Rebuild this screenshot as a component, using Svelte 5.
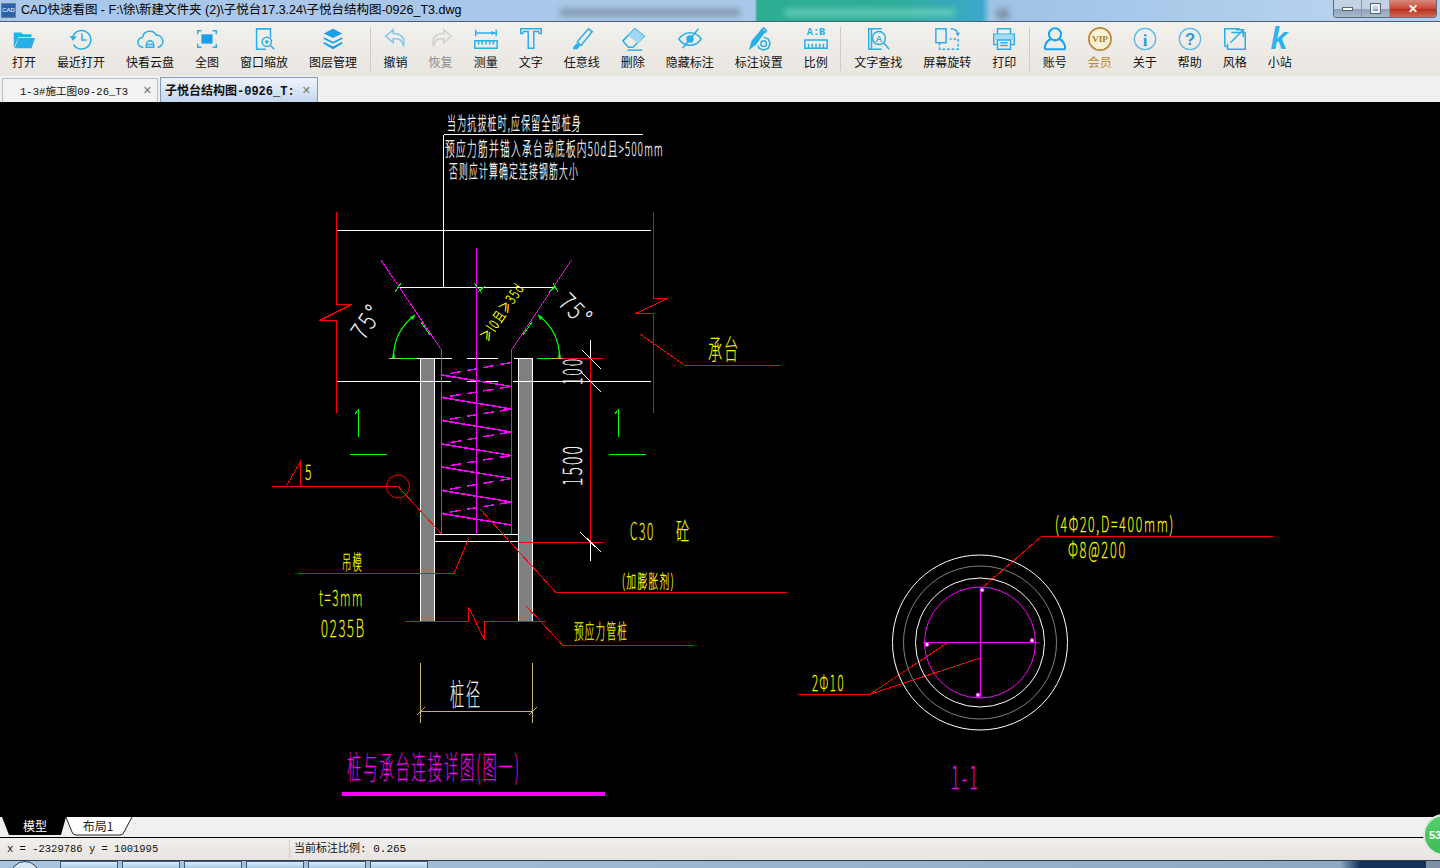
<script>
  // toolbar icon bodies, drawn on a 28x28 box
  const blue = '#29aee8';
  const line = `fill="none" stroke="${blue}" stroke-width="1.6"`;
  const icons = {
    open: `<path d="M3 7h8l2 2h9v3H8l-5 12z" fill="${blue}"/><path d="M8 13h18l-4 11H4z" fill="${blue}"/>`,
    recent: `<path d="M5 12a10 10 0 1 1 1 8" ${line}/><path d="M1.5 11l4 5 4-5z" fill="${blue}"/><path d="M15 8v7h5" ${line} stroke-width="2"/>`,
    cloud: `<path d="M7 23a5.500 5.500 0 0 1-1-11 8 8 0 0 1 15-2 6.500 6.500 0 0 1 1 13" ${line} stroke-width="1.800"/><path d="M10 23v-3a4 4 0 0 1 8 0v3zM10 20h8" ${line}/>`,
    full: `<path d="M4 9V5h4M20 5h4v4M24 19v4h-4M8 23H4v-4" ${line} stroke-width="2"/><rect x="8" y="9" width="12" height="10" fill="#1b9fe6"/>`,
    zoomwin: `<path d="M21 12V3H6v22h10" ${line}/><path d="M6 3h15" ${line} stroke-width="2.400"/><circle cx="17" cy="17" r="5" ${line}/><path d="M15 17h4M17 15v4" ${line}/><path d="M21 21l4 4" ${line} stroke-width="2.200"/>`,
    layers: `<path d="M14 3l10 5-10 5-10-5z" fill="#1b9fe6"/><path d="M4 12l10 5 10-5v2l-10 5-10-5z" fill="#1b9fe6"/><path d="M4 17l10 5 10-5v2l-10 6-10-6z" fill="#1b9fe6"/>`,
    undo: `<path d="M11 4L3 11l8 7v-4c6-1 10 1 11 8 2-8-1-14-11-14z" fill="none" stroke="#7cc7ef" stroke-width="1.600"/>`,
    redo: `<path d="M17 4l8 7-8 7v-4c-6-1-10 1-11 8-2-8 1-14 11-14z" fill="none" stroke="#cfcfcf" stroke-width="1.600"/>`,
    measure: `<path d="M3 4v7M25 4v7M4 7.500h20" ${line}/><path d="M20 5l4 2.500-4 2.500z" fill="${blue}"/><path d="M2 16h24v8H2zM6 16v4M10 16v4M14 16v4M18 16v4M22 16v4" ${line}/>`,
    text: `<path d="M3 3h22v5h-2l-1-2h-5v18h-6V6H6L5 8H3z" ${line} stroke-width="1.800"/>`,
    pen: `<path d="M9 17L21 3l4 3-12 15z" ${line}/><path d="M9 18l3 3-3 4H4l1-3z" fill="${blue}"/>`,
    eraser: `<path d="M3 16L16 3l10 8-12 12H9z" ${line}/><path d="M9 10l10 9 7-8-10-8z" fill="#9fd8f4"/><path d="M8 26h16" ${line}/>`,
    eye: `<path d="M2 14c6-9 18-9 24 0-6 9-18 9-24 0z" ${line} stroke-width="1.800"/><circle cx="14" cy="14" r="4" fill="${blue}"/><path d="M23 3L6 24" ${line}/>`,
    setting: `<path d="M3 26l3-10L17 3l4 3-10 14z" fill="${blue}"/><path d="M16 5l3-3 3 3-2 3" ${line}/><circle cx="19" cy="19" r="3" ${line}/><path d="M19 12l5 2 2 5-2 5-5 2-5-2-1-3" ${line}/>`,
    ratio: `<text x="14" y="10" text-anchor="middle" font-family="Liberation Mono, monospace" font-weight="700" font-size="11" fill="${blue}">A:B</text><path d="M2 15h24v9H2zM6 19v5M10 19v5M14 19v5M18 19v5M22 19v5" ${line} stroke-width="1.300"/>`,
    search: `<path d="M18 3H4v22h14M4 3h3v22" ${line}/><circle cx="15" cy="13" r="7" ${line} stroke-width="1.800"/><text x="15" y="17" text-anchor="middle" font-family="Liberation Sans, sans-serif" font-weight="700" font-size="10" fill="${blue}">A</text><path d="M20 18l6 7" ${line} stroke-width="2"/>`,
    rotate: `<rect x="2" y="3" width="11" height="15" ${line} stroke-width="1.800"/><path d="M6 18v7h20V14h-9" ${line} stroke-dasharray="3 2"/><path d="M18 3c4 0 7 2 8 6" ${line}/><path d="M23 8l3 3 2-4z" fill="${blue}"/>`,
    print: `<path d="M7 9V3h14v6M7 20H3V9h22v11h-4" ${line}/><rect x="4" y="9" width="20" height="6" fill="#a6dcf6"/><path d="M7 15h14v10H7zM10 18h8M10 21h8" ${line}/>`,
    user: `<circle cx="14" cy="9" r="6.500" fill="none" stroke="#14a3f5" stroke-width="2.200"/><path d="M3 25c0-8 4-10 7-11M25 25c0-8-4-10-7-11M3 25h22" fill="none" stroke="#14a3f5" stroke-width="2.200"/>`,
    vip: `<circle cx="14" cy="14" r="12" fill="#fbf3d8" stroke="#b8893a" stroke-width="1.800"/><text x="14" y="17.500" text-anchor="middle" font-family="Liberation Serif, serif" font-weight="700" font-size="10" fill="#a87c1e">VIP</text>`,
    info: `<circle cx="14" cy="14" r="11.500" fill="none" stroke="#5cb8e6" stroke-width="1.400"/><text x="14" y="21" text-anchor="middle" font-family="Liberation Serif, serif" font-weight="700" font-size="18" fill="#2a9bd8">i</text>`,
    help: `<circle cx="14" cy="14" r="11.500" fill="none" stroke="#5cb8e6" stroke-width="1.400"/><text x="14" y="20.500" text-anchor="middle" font-family="Liberation Sans, sans-serif" font-weight="700" font-size="18" fill="#2a9bd8">?</text>`,
    style: `<path d="M19 3H3v19M3 22h3M9 3" ${line}/><path d="M10 7h15v18H6v-6" ${line} stroke-width="1.800"/><path d="M9 18L23 4M15 4h8v8" ${line} stroke-width="1.800"/>`,
    kstation: `<text x="13" y="25" text-anchor="middle" font-family="Liberation Sans, sans-serif" font-style="italic" font-weight="700" font-size="33" fill="#2bb3ec">k</text>`
  };

  const tools = [
    { label: '打开', icon: 'open' },
    { label: '最近打开', icon: 'recent' },
    { label: '快看云盘', icon: 'cloud' },
    { label: '全图', icon: 'full' },
    { label: '窗口缩放', icon: 'zoomwin' },
    { label: '图层管理', icon: 'layers', sep: true },
    { label: '撤销', icon: 'undo' },
    { label: '恢复', icon: 'redo', off: true },
    { label: '测量', icon: 'measure' },
    { label: '文字', icon: 'text' },
    { label: '任意线', icon: 'pen' },
    { label: '删除', icon: 'eraser' },
    { label: '隐藏标注', icon: 'eye' },
    { label: '标注设置', icon: 'setting' },
    { label: '比例', icon: 'ratio', sep: true },
    { label: '文字查找', icon: 'search' },
    { label: '屏幕旋转', icon: 'rotate' },
    { label: '打印', icon: 'print', sep: true },
    { label: '账号', icon: 'user' },
    { label: '会员', icon: 'vip', gold: true },
    { label: '关于', icon: 'info' },
    { label: '帮助', icon: 'help' },
    { label: '风格', icon: 'style' },
    { label: '小站', icon: 'kstation' }
  ];

  // drawing geometry, in page coordinates (the svg viewBox starts at y=102)
  const W = '#ffffff', R = '#ff0000', M = '#ff00ff', G = '#00ff00', Y = '#ffff00', T = '#c9b26e';
  const lines = [
    [W, '443.500,134.500 643,134.500'],
    [W, '443.500,134.500 443.500,287.500'],
    [W, '337,230.500 651,230.500'],
    [W, '400,287.500 553,287.500'],
    [W, '337,381.500 451,381.500'], [W, '467,381.500 498,381.500'], [W, '513,381.500 651,381.500'],
    [T, '389,358.500 402,358.500'], [G, '402,358.500 417,358.500'], [W, '417,358.500 452,358.500'], [W, '467,358.500 498,358.500'],
    [W, '514,358.500 533,358.500'], [G, '537,358.500 552,358.500'], [T, '552,358.500 563,358.500'],
    [W, '434,534.500 518,534.500'], [W, '434,541.500 518,541.500'],
    // break lines of the cap
    [R, '336.500,212 336.500,304.500 351.500,304.500 319.500,320.500 336.500,320.500 336.500,413'],
    [R, '653.500,212 653.500,298.500 667.500,298.500 635.500,313.500 653.500,313.500 653.500,413'],
    // funnel and centre
    [M, '381,260 441.500,350 441.500,534'],
    [M, '571.500,260 511.500,350 511.500,534'],
    [M, '476.500,248 476.500,534'],
    [G, '421,322 430,335'], [G, '532,322 523,335'],
    [G, '395,292 401,283'], [G, '474,283 482,293'], [G, '478,292 485,286'],
    [G, '553,283 558,292'], [G, '549,292 556,286'],
    // leaders
    [R, '640,334 685,365.500 780,365.500'],
    [R, '563,358.500 603,358.500'], [R, '519,542.500 603,542.500'], [R, '590.500,358 590.500,542'],
    [W, '590.500,340 590.500,358'], [W, '590.500,542 590.500,561'],
    [W, '582,350 601,369'], [W, '582,373 601,392'], [W, '580,532 601,552'],
    [R, '272,486.500 398,486.500 441.500,534'],
    [R, '286.500,486 300.500,461.500 300.500,486'],
    [R, '480,509 556,592.500 787,592.500'],
    [R, '298,573.500 454,573.500 468.500,539'],
    [R, '405,621.500 468.500,621.500 468.500,607 484.500,640 484.500,621.500 546,621.500'],
    [R, '526,606 563,645.500 693,645.500'],
    // section marks
    [G, '358.500,409 358.500,437'], [G, '355,414 358.500,409'], [G, '350,454.500 387,454.500'],
    [G, '618.500,409 618.500,437'], [G, '615,414 618.500,409'], [G, '609,454.500 646,454.500'],
    // pile diameter dimension
    [T, '420.500,663 420.500,723'], [T, '532.500,663 532.500,723'], [T, '420,711.500 532,711.500'],
    [T, '417,715 425,707'], [T, '529,715 537,707'],
    // section 1-1
    [M, '923,642.500 1037,642.500'], [M, '980.500,587 980.500,698'],
    [R, '982,588 1041.500,536.500 1273,536.500'],
    [R, '798,694.500 869.500,694.500 947,643'],
    [R, '869.500,694.500 980,658']
  ];

  // stirrup zigzag, one row per turn
  const rows = [375, 397.5, 420.5, 444, 467, 490.5, 513.5];
  const descents = rows.map((y) => `442,${y} 511,${y + 11.5}`);
  const ascents = [362.5, ...rows.slice(0, 6).map((y) => y + 11.5)].map((y, i) => `511,${y} 442,${rows[i]}`);

  const rings = [
    { r: 87.5, c: W }, { r: 76.5, c: '#808080' }, { r: 64.5, c: W }, { r: 55.5, c: M }
  ];
  const dots = [[982, 590], [1032, 640.5], [927, 644.5], [978, 695]];

  // t text, x/y baseline start, w drawn length, s font size, c colour, r rotation
  const labels = [
    { t: '当为抗拔桩时,应保留全部桩身', x: 447, y: 130, w: 135, s: 18, c: W },
    { t: '预应力筋并锚入承台或底板内50d且>500mm', x: 445, y: 156, w: 219, s: 19, c: W },
    { t: '否则应计算确定连接钢筋大小', x: 449, y: 178, w: 130, s: 18, c: W },
    { t: '75°', x: 364, y: 341, w: 36, s: 25, c: W, r: -55 },
    { t: '75°', x: 557, y: 304, w: 36, s: 25, c: W, r: 45 },
    { t: '≥l0且≥35d', x: 488, y: 342, w: 66, s: 14, c: Y, r: -56 },
    { t: '100', x: 582, y: 385, w: 28, s: 26, c: W, r: -90 },
    { t: '1500', x: 582, y: 486, w: 42, s: 27, c: W, r: -90 },
    { t: '5', x: 305, y: 480, w: 8, s: 21, c: Y },
    { t: '承台', x: 708, y: 360, w: 32, s: 28, c: Y },
    { t: 'C30', x: 630, y: 540, w: 25, s: 24, c: Y },
    { t: '砼', x: 676, y: 540, w: 15, s: 24, c: Y },
    { t: '(加膨胀剂)', x: 622, y: 588, w: 53, s: 18, c: Y },
    { t: '吊模', x: 342, y: 570, w: 21, s: 20, c: Y },
    { t: 't=3mm', x: 319, y: 606, w: 45, s: 23, c: Y },
    { t: '0235B', x: 321, y: 637, w: 45, s: 24, c: Y },
    { t: '预应力管桩', x: 574, y: 639, w: 54, s: 20, c: Y },
    { t: '桩径', x: 450, y: 705, w: 32, s: 30, c: W },
    { t: '桩与承台连接详图(图一)', x: 347, y: 779, w: 174, s: 32, c: M },
    { t: '(4Φ20,D=400mm)', x: 1055, y: 532, w: 120, s: 21, c: Y },
    { t: 'Φ8@200', x: 1068, y: 558, w: 59, s: 23, c: Y },
    { t: '2Φ10', x: 812, y: 691, w: 33, s: 22, c: Y },
    { t: '1-1', x: 951, y: 789, w: 29, s: 32, c: M }
  ];

  const taskButtons = [0, 1, 2, 3, 4, 5];
</script>

<div class="window">
  <header class="titlebar">
    <span class="blot blot-a"></span>
    <span class="blot blot-b"></span>
    <span class="blot blot-c"></span>
    <span class="appicon">CAD</span>
    <span class="title">CAD快速看图 - F:\徐\新建文件夹 (2)\子悦台17.3.24\子悦台结构图-0926_T3.dwg</span>
    <div class="winbtns">
      <span class="winbtn"><i class="min"></i></span>
      <span class="winbtn"><i class="max"></i></span>
      <span class="winbtn close">✕</span>
    </div>
  </header>

  <nav class="toolbar">
    {#each tools as tool}
      <div class="tool" class:off={tool.off} class:gold={tool.gold}>
        <svg width="28" height="28" viewBox="0 0 28 28">{@html icons[tool.icon]}</svg>
        <span>{tool.label}</span>
      </div>
      {#if tool.sep}<div class="sep"></div>{/if}
    {/each}
  </nav>

  <div class="tabs">
    <div class="tab">
      <span class="tabname">1-3#施工图09-26_T3</span>
      <span class="x">✕</span>
    </div>
    <div class="tab active">
      <span class="tabname">子悦台结构图-0926_T:</span>
      <span class="x">✕</span>
    </div>
  </div>

  <main class="canvas">
    <svg class="drawing" width="1440" height="715" viewBox="0 102 1440 715">
      <rect x="420.500" y="358" width="14" height="263" fill="#808080" />
      <rect x="518.500" y="358" width="14" height="263" fill="#808080" />
      <g stroke="#ffffff" fill="none" shape-rendering="crispEdges">
        <path d="M420.500 358V621M434.500 358V621M518.500 358V621M532.500 358V621" />
      </g>

      <g fill="none" shape-rendering="crispEdges">
        {#each lines as [color, pts]}
          <polyline points={pts} stroke={color} />
        {/each}
        {#each descents as pts}
          <polyline points={pts} stroke="#ff00ff" stroke-width="1.500" />
        {/each}
        {#each ascents as pts}
          <polyline points={pts} stroke="#ff00ff" stroke-width="1.500" stroke-dasharray="11 6" />
        {/each}
      </g>

      <g fill="none">
        <path d="M393.500 356C394 338 403 324 415 315" stroke="#00ff00" stroke-width="1.200" />
        <path d="M559.500 356C559 338 550 324 538 315" stroke="#00ff00" stroke-width="1.200" />
        <circle cx="398" cy="486.500" r="11.500" stroke="#ff0000" />
        {#each rings as ring}
          <circle cx="980" cy="642.500" r={ring.r} stroke={ring.c} />
        {/each}
      </g>
      <path d="M392 358l1.500-8 1.500 8zM558 358l1.500-8 1.500 8zM415 315l-5 2 3 3zM538 315l5 2-3 3z" fill="#00ff00" />

      {#each dots as [cx, cy]}
        <circle {cx} {cy} r="2" fill="#ffffff" stroke="#ff00ff" />
      {/each}

      <rect x="342" y="792" width="263" height="4" fill="#ff00ff" />

      <g class="cadtext">
        {#each labels as l}
          <text
            x={l.x}
            y={l.y}
            fill={l.c}
            stroke={l.c}
            font-size={l.s}
            textLength={l.w}
            lengthAdjust="spacingAndGlyphs"
            transform={l.r ? `rotate(${l.r} ${l.x} ${l.y})` : undefined}
          >{l.t}</text>
        {/each}
      </g>
    </svg>
  </main>

  <div class="layouts">
    <svg class="layouttabs" width="140" height="20" viewBox="0 0 140 20">
      <path d="M2 0l7 18h52l5-18z" fill="#000000" />
      <path d="M66 0l6 15q1 3 4 3h44q3 0 4-3l8-15" fill="#ffffff" stroke="#222222" />
      <text x="35" y="14" text-anchor="middle" fill="#ffffff">模型</text>
      <text x="98" y="14" text-anchor="middle" fill="#222222">布局1</text>
    </svg>
  </div>

  <div class="status">
    <span class="coords">x = -2329786 y = 1001995</span>
    <span class="scale">当前标注比例: 0.265</span>
  </div>

  <footer class="taskbar">
    <span class="orb"></span>
    {#each taskButtons as b}
      <span class="taskbtn" data-slot={b}></span>
    {/each}
    <span class="tray"></span>
  </footer>

  <div class="badge">53</div>
</div>

<style>
  :global(body) {
    margin: 0;
    overflow: hidden;
    background: #000;
  }

  .window {
    position: relative;
    display: flex;
    flex-direction: column;
    width: 1440px;
    height: 868px;
    overflow: hidden;
    font-family: "Liberation Sans", "Noto Sans CJK SC", sans-serif;
    font-size: 12px;
    color: #111;
  }

  .titlebar {
    position: relative;
    flex: 0 0 22px;
    box-sizing: border-box;
    display: flex;
    align-items: flex-start;
    overflow: hidden;
    border-bottom: 1px solid #4f5f70;
    background: linear-gradient(90deg, #a9c8e9 0, #a9c8e9 755px, #2dae92 757px, #2fac9c 900px, #3aa8cc 982px, #9dc3e6 990px, #b6d1ee 1330px, #b6d1ee 100%);
  }

  .blot {
    position: absolute;
    top: 9px;
    height: 7px;
    filter: blur(3px);
  }
  .blot-a { left: 560px; width: 180px; background: #7f93aa; }
  .blot-b { left: 785px; width: 170px; background: #66cdb8; }
  .blot-c { left: 997px; width: 12px; height: 10px; background: #7d8fa3; }

  .appicon {
    position: relative;
    box-sizing: border-box;
    width: 15px;
    height: 15px;
    margin: 3px 5px 0 1px;
    background: #2a64a8;
    border: 1px solid #6d7f94;
    color: #fff;
    font-size: 6px;
    line-height: 13px;
    text-align: center;
    overflow: hidden;
  }

  .title {
    position: relative;
    font-size: 12.500px;
    line-height: 21px;
    white-space: nowrap;
    color: #000;
  }

  .winbtns {
    position: relative;
    display: flex;
    margin-left: auto;
    margin-right: 3px;
    height: 17px;
    border: 1px solid #5b6a7c;
    border-top: 0;
    border-radius: 0 0 4px 4px;
    overflow: hidden;
  }

  .winbtn {
    display: flex;
    align-items: center;
    justify-content: center;
    width: 27px;
    border-right: 1px solid #8496a8;
    background: linear-gradient(#c3d3e4, #c3d3e4 50%, #8fa2b7 55%, #a9bbce);
  }

  .winbtn.close {
    width: 46px;
    border-right: 0;
    color: #fff;
    font-size: 12px;
    font-weight: 700;
    background: linear-gradient(#d78a7e, #c74a38 50%, #b8301f 55%, #cf6a58);
  }

  .min {
    width: 11px;
    height: 4px;
    background: #f4f6f8;
    border: 1px solid #55677a;
    box-sizing: border-box;
  }

  .max {
    width: 9px;
    height: 9px;
    border: 2px solid #eef2f6;
    outline: 1px solid #55677a;
    box-sizing: border-box;
  }

  .toolbar {
    flex: 0 0 54px;
    box-sizing: border-box;
    display: flex;
    align-items: stretch;
    padding-left: 1.500px;
    background: linear-gradient(#f2f1ed, #e9e5e0);
  }

  .tool {
    display: flex;
    flex-direction: column;
    align-items: center;
    padding: 4px 10.500px 0;
  }

  /* icons hang over the item's sides, the label alone sets its width */
  .tool svg {
    display: block;
    flex: none;
    width: 26px;
    height: 26px;
    margin: 0 -10px;
    overflow: visible;
  }

  .tool span {
    margin-top: 2px;
    line-height: 18px;
    white-space: nowrap;
  }

  .tool.off span { color: #8d8d8d; }
  .tool.gold span { color: #b98a2e; }

  .sep {
    flex: 0 0 1px;
    margin: 5px 2.500px 5px 2px;
    background: #cfccc7;
  }

  .tabs {
    flex: 0 0 26px;
    box-sizing: border-box;
    display: flex;
    align-items: flex-end;
    padding-left: 2px;
    background: #f0f0f0;
  }

  .tab {
    box-sizing: border-box;
    display: flex;
    align-items: center;
    width: 156px;
    height: 24px;
    padding: 0 5px 0 17px;
    border: 1px solid #b8c2cc;
    border-bottom: 0;
    background: #f2f2f2;
    font-family: "Liberation Mono", "Noto Sans CJK SC", monospace;
    font-size: 10.600px;
  }

  .tab.active {
    width: 158px;
    height: 25px;
    margin-left: 2px;
    padding: 0 6px 0 4px;
    border: 1px solid #7f9db9;
    border-bottom: 0;
    background: linear-gradient(#f0f4fa, #c3d6ee);
    font-size: 12px;
    font-weight: 700;
  }

  .tabname {
    flex: 1;
    overflow: hidden;
    white-space: nowrap;
  }

  .tab.active .tabname { flex: 0 0 130px; }

  .x {
    margin-left: auto;
    color: #777;
    font-size: 11px;
    font-weight: 400;
    font-family: "DejaVu Sans", sans-serif;
  }

  .canvas {
    flex: 0 0 715px;
    background: #000;
    overflow: hidden;
  }

  .drawing { display: block; }

  /* stick-font look: thin strokes with air between the letters */
  .cadtext text {
    font-family: "Noto Sans CJK SC", "Noto Sans", sans-serif;
    font-weight: 100;
    letter-spacing: 0.14em;
    stroke-width: 0.4px;
  }

  .layouts {
    flex: 0 0 21px;
    box-sizing: border-box;
    background: #f0f0f0;
    border-bottom: 1px solid #000;
  }

  .layouttabs {
    display: block;
    font-family: "Noto Sans CJK SC", sans-serif;
    font-size: 12px;
  }

  .status {
    flex: 0 0 22px;
    box-sizing: border-box;
    display: flex;
    align-items: center;
    background: linear-gradient(#f1efec, #e8e4df);
    font-family: "Liberation Mono", "Noto Sans CJK SC", monospace;
    font-size: 10.500px;
  }

  .coords {
    width: 282px;
    padding-left: 7px;
  }

  .scale {
    padding-left: 4px;
    border-left: 1px solid #d0cdc8;
    font-size: 11px;
    line-height: 18px;
  }

  .taskbar {
    flex: 0 0 8px;
    box-sizing: border-box;
    display: flex;
    gap: 4px;
    overflow: hidden;
    border-top: 1px solid #2b3e52;
    background: linear-gradient(90deg, #a9c4de, #8fa9c5 1340px, #14335a 1360px, #14335a);
  }

  .orb {
    width: 30px;
    height: 30px;
    margin: 0 16px 0 10px;
    border-radius: 50%;
    background: #d7e6f2;
    border: 1px solid #20405f;
    box-sizing: border-box;
  }

  .taskbtn {
    width: 58px;
    background: linear-gradient(#dcebf7, #a9cbe6);
    border: 1px solid #3f5a76;
    border-bottom: 0;
    box-sizing: border-box;
  }

  .tray {
    margin-left: auto;
    width: 14px;
    background: #7d90a5;
  }

  .badge {
    position: absolute;
    left: 1423px;
    top: 814px;
    width: 42px;
    height: 42px;
    box-sizing: border-box;
    border: 2px solid #dfe6de;
    border-radius: 50%;
    background: linear-gradient(#56d06a, #3dbb55);
    color: #fff;
    font-size: 11px;
    font-weight: 700;
    line-height: 38px;
    padding-left: 4px;
  }
</style>
